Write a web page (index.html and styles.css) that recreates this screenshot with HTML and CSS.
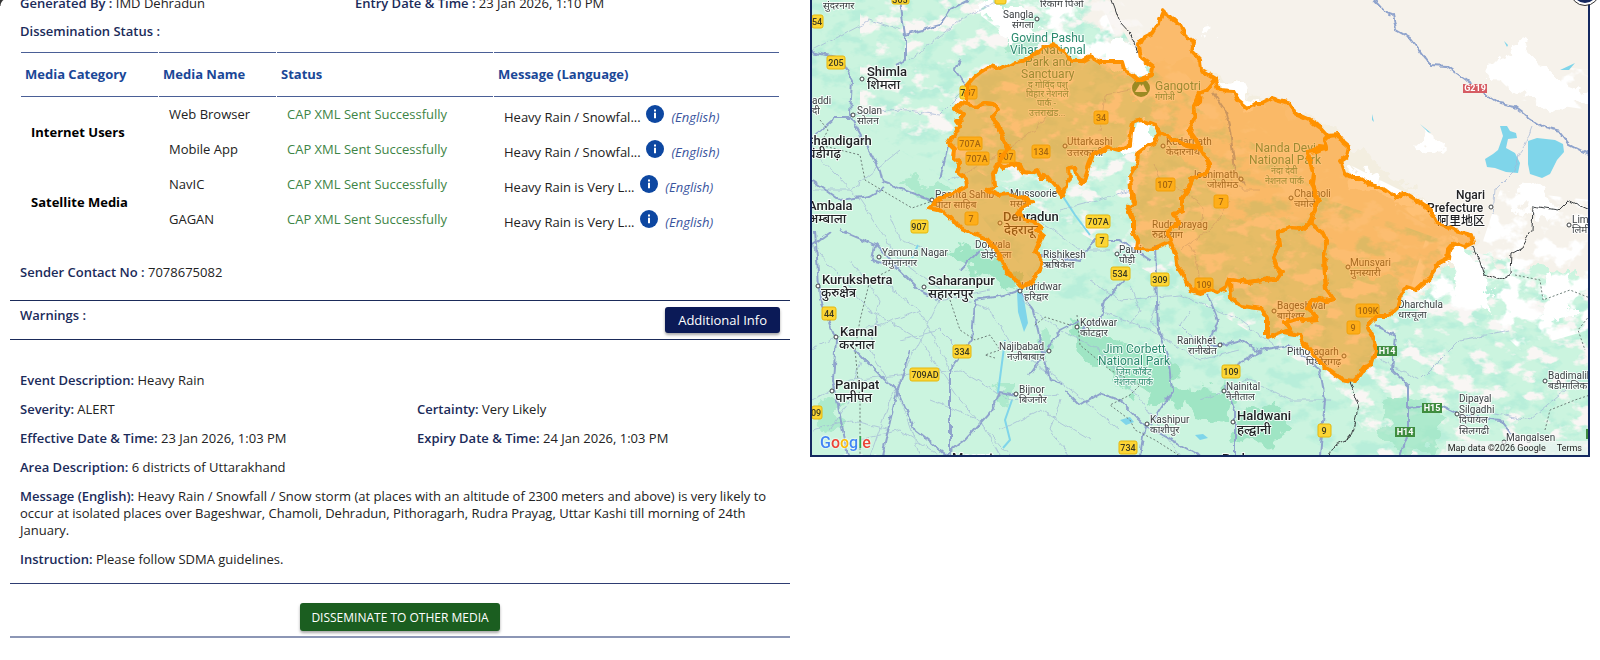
FILE: index.html
```html
<!DOCTYPE html>
<html lang="en">
<head>
<meta charset="utf-8">
<title>Alert details</title>
<link rel="stylesheet" href="styles.css">
</head>
<body>
<span class="corner"></span>
<main class="page">
  <section class="details">
    <div class="pair pair-head">
      <p class="item"><b>Generated By :</b> IMD Dehradun</p>
      <p class="item"><b>Entry Date &amp; Time :</b> 23 Jan 2026, 1:10 PM</p>
    </div>
    <p class="item status-title"><b>Dissemination Status :</b></p>
    <table class="media">
      <colgroup><col class="c-cat"><col class="c-name"><col class="c-status"><col></colgroup>
      <thead>
        <tr><th>Media Category</th><th>Media Name</th><th>Status</th><th>Message (Language)</th></tr>
      </thead>
      <tbody>
        <tr><td rowspan="2" class="cat">Internet Users</td><td>Web Browser</td><td class="sent">CAP XML Sent Successfully</td>
          <td class="msg">Heavy Rain / Snowfal... <svg class="info" viewBox="0 0 18 18"><circle cx="9" cy="9" r="9" fill="#0d47a1"/><path d="M8 4.500h2v2H8zM8 7.700h2v5.500H8z" fill="#fff"/></svg> <i>(English)</i></td></tr>
        <tr><td>Mobile App</td><td class="sent">CAP XML Sent Successfully</td>
          <td class="msg">Heavy Rain / Snowfal... <svg class="info" viewBox="0 0 18 18"><circle cx="9" cy="9" r="9" fill="#0d47a1"/><path d="M8 4.500h2v2H8zM8 7.700h2v5.500H8z" fill="#fff"/></svg> <i>(English)</i></td></tr>
        <tr><td rowspan="2" class="cat">Satellite Media</td><td>NavIC</td><td class="sent">CAP XML Sent Successfully</td>
          <td class="msg">Heavy Rain is Very L... <svg class="info" viewBox="0 0 18 18"><circle cx="9" cy="9" r="9" fill="#0d47a1"/><path d="M8 4.500h2v2H8zM8 7.700h2v5.500H8z" fill="#fff"/></svg> <i>(English)</i></td></tr>
        <tr><td>GAGAN</td><td class="sent">CAP XML Sent Successfully</td>
          <td class="msg">Heavy Rain is Very L... <svg class="info" viewBox="0 0 18 18"><circle cx="9" cy="9" r="9" fill="#0d47a1"/><path d="M8 4.500h2v2H8zM8 7.700h2v5.500H8z" fill="#fff"/></svg> <i>(English)</i></td></tr>
      </tbody>
    </table>
    <p class="item contact"><b>Sender Contact No :</b> 7078675082</p>
    <div class="warnings">
      <p class="item"><b>Warnings :</b></p>
      <button type="button" class="btn btn-info">Additional Info</button>
    </div>
    <div class="event">
      <p class="item"><b>Event Description:</b> Heavy Rain</p>
      <div class="pair">
        <p class="item"><b>Severity:</b> ALERT</p>
        <p class="item"><b>Certainty:</b> Very Likely</p>
      </div>
      <div class="pair">
        <p class="item"><b>Effective Date &amp; Time:</b> 23 Jan 2026, 1:03 PM</p>
        <p class="item"><b>Expiry Date &amp; Time:</b> 24 Jan 2026, 1:03 PM</p>
      </div>
      <p class="item"><b>Area Description:</b> 6 districts of Uttarakhand</p>
      <p class="item"><b>Message (English):</b> Heavy Rain / Snowfall / Snow storm (at places with an altitude of 2300 meters and above) is very likely to occur at isolated places over Bageshwar, Chamoli, Dehradun, Pithoragarh, Rudra Prayag, Uttar Kashi till morning of 24th January.</p>
      <p class="item"><b>Instruction:</b> Please follow SDMA guidelines.</p>
    </div>
    <div class="actions">
      <button type="button" class="btn btn-send">DISSEMINATE TO OTHER MEDIA</button>
    </div>
  </section>

  <section class="map">
    <svg class="map-canvas" viewBox="812 0 776 455" preserveAspectRatio="xMidYMid slice">
      <defs>
        <filter id="rough" x="-10%" y="-10%" width="120%" height="120%">
          <feTurbulence type="fractalNoise" baseFrequency="0.050" numOctaves="4" seed="7"/>
          <feDisplacementMap in="SourceGraphic" scale="34" xChannelSelector="R" yChannelSelector="G"/>
        </filter>
        <filter id="wiggle" x="-5%" y="-5%" width="110%" height="110%">
          <feTurbulence type="fractalNoise" baseFrequency="0.120" numOctaves="2" seed="3"/>
          <feDisplacementMap in="SourceGraphic" scale="6" xChannelSelector="R" yChannelSelector="G"/>
        </filter>
        <filter id="relief" x="0" y="0" width="100%" height="100%">
          <feTurbulence type="fractalNoise" baseFrequency="0.045 0.070" numOctaves="4" seed="12"/>
          <feColorMatrix values="0 0 0 0 0.480  0 0 0 0 0.860  0 0 0 0 0.700  0 5 0 0 -2.400"/>
          <feComposite in2="SourceGraphic" operator="in"/>
        </filter>
        <filter id="ridges" x="0" y="0" width="100%" height="100%">
          <feTurbulence type="fractalNoise" baseFrequency="0.040 0.060" numOctaves="4" seed="31"/>
          <feColorMatrix values="0 0 0 0 0.950  0 0 0 0 0.925  0 0 0 0 0.900  0 0 8 0 -4.300"/>
          <feComposite in2="SourceGraphic" operator="in"/>
        </filter>
        <filter id="peaks" x="0" y="0" width="100%" height="100%">
          <feTurbulence type="fractalNoise" baseFrequency="0.040 0.050" numOctaves="4" seed="5"/>
          <feColorMatrix values="0 0 0 0 1  0 0 0 0 1  0 0 0 0 1  9 0 0 0 -4.300"/>
          <feComposite in2="SourceGraphic" operator="in"/>
        </filter>
      </defs>

      <rect x="812" width="778" height="456" fill="#cbf4df"/>
      <g filter="url(#rough)">
        <path d="M1040-20L1120 50L1210 90L1330 160L1480 255L1530 270L1640 290V-20Z" fill="#f6f2eb"/>
        <path d="M1110 70L1190 60 1330 130 1480 240 1420 290 1340 260 1280 215 1230 220 1160 120Z" fill="#f3eee0"/>
      </g>
      <path class="hills" filter="url(#relief)" d="M812 0H1105L1140 60L1330 200L1470 250L1590 290V456H1345L1210 400L1120 330L1040 290L960 190L870 130L812 100Z"/>
      <path class="hills" filter="url(#ridges)" d="M860 0H1120L1200 90L1330 170L1470 250L1590 290V456H1380L1330 380L1180 290L1040 210L960 160L860 110Z"/>
      <path class="hills" filter="url(#peaks)" d="M1430 225L1480 250 1590 250V330L1520 350 1490 320 1440 310 1410 290ZM960 0H1100L1130 70 1090 60 1000 30ZM1480 60L1590 70V110L1520 100ZM1350 165L1440 210 1430 230ZM1500 190L1590 200V250H1480Z"/>
      <g fill="#9fe5c4" filter="url(#rough)">
        <path d="M955 245l45 8 25 30-10 12-35-20-28-15zM1075 325l40 15 50 15 22 45-25 8-50-28-38-35zM1180 390l30-12 25 20-10 25-35-5zM1235 415l40-12 20 25-30 20-35-10z"/>
        <path d="M905 175l50 15-10 12-45-12zM1390 395l30 5 30 20-20 30-35 5-15-20zM1000 20l35 5 5 30-28-5z" opacity=".7"/>
        <path d="M1040 330l15 15-5 20-15-15zM995 385h15l-2 20-14-5zM820 400l25 5-5 22-22-2z" opacity=".7"/>
      </g>
      <g fill="#fff" filter="url(#rough)">
        <path d="M975 5h40l25 20-15 15-35-12zM1105 40l20-5 22 25 5 20-22-2-20-20zM1130 125l22-6 5 20-18 16-12-6zM1215 80l28 5 20 20-20 6-18-18zM1205 38l6-8 5 12z"/>
        <path d="M1345 165l25 12 30 15 15 2 16 18-30-8-50-22zM1450 240l20 12 10 20 15 18-5 20-30-10-10-30zM1555 275l15 18 0 22-22 8-8-15z"/>
        <path d="M1488 70l15-15 10 5 5-20 10 8 5 20 15 8 20 10 25 5v15l-30-5-15 12-20-15-20-6zM1520 192l30-5 8 22-20 10-20-5zM1425 128l8 5 5 18-12-5z"/>
      </g>
      <g fill="#7fd5ea">
        <path d="M1500 126l7 0 3 5 6 2 1 5-9 1-2 9 9 5 5 10-2 10-12-1-11-4-8-1-2-8 8-5 5-4 5-14z"/>
        <path d="M1528 141l9-3 18 2 8 4 1 8-7 8-7 14-8 4-12-4-2-10z"/>
        <path d="M1560 70l15-7-6 7zM1420 124l11 9-3-1zM1017 292l6 1 5 30-4 9-6-20zM1120 420l10-3 4 5-8 3zM1195 435l8-1 5 4-8 2zM1372 114l2 8-2-2zM1504 41l4 4-1 2z"/>
      </g>
      <path class="river" d="M1062 195L1075 215 1090 235M1012 400L1005 420 1010 440 1003 448M918 245L912 258M998 393L1005 340"/>

      <g class="lanes" filter="url(#wiggle)">
        <path d="M812 150L860 200 900 260 940 290 990 310 1015 350 1060 380 1120 430M812 245L870 310 920 340 960 400 1010 456M812 400L850 380 900 375 960 370 1010 400 1060 395M870 456L890 400 940 300 990 290M812 350L850 330 880 325 920 310M850 260L880 300 870 350 900 400 920 456M1020 300L1060 330 1100 350 1140 400 1180 456M1040 220L1080 250 1110 250M1060 210L1100 200 1130 190M1090 280L1120 300 1180 295 1240 320 1280 350M1100 310L1150 330 1200 360 1240 350M1200 400L1250 380 1290 400 1330 400"/>
        <path d="M860 440L900 430 940 456M812 430L850 420 890 430M900 340L940 330 960 350M880 280L920 310 950 370M1000 430L1040 410 1090 440M1060 400L1050 430 1070 456M860 360L850 400 830 430M930 400L980 420 1000 456M890 215L900 240 930 250M1160 300L1150 320 1165 340M1190 310L1180 325 1195 340M1130 285L1140 310 1130 325"/>
        <path d="M850 115L900 110 940 115 970 85M812 50L870 20 900 30M910 60L960 20 1000 0M812 190L850 190 900 150M950 180L990 160 1035 130 1050 110M1230 180L1245 190 1260 190M1180 250L1210 230 1230 200M1380 360L1420 380 1460 340 1510 330M1480 410L1530 420 1590 370M1100 130L1105 95 1130 90M1153 165L1160 180 1190 195 1203 205 1202 225M1190 245L1198 265 1200 290M1532 127L1525 145 1518 155 1515 170 1495 190 1493 215"/>
      </g>
      <g class="roads" filter="url(#wiggle)">
        <path d="M812 52L840 58 852 80 850 115 880 170 883 182 930 200M850 118L835 118 815 135M900 0L905 35 905 60 895 65M905 35L940 25 950 10 968 0M960 60L955 70 968 90M948 145L940 180M815 230L820 300 836 340 833 380 848 456M812 245L830 232M840 230L875 245 900 270 922 292 940 300M875 245L872 260 890 265M884 188L870 196 840 200 812 180M855 350L900 395 915 430 948 456M910 350L895 400 882 456M975 300L972 340 950 370 950 400 950 456M975 300L1005 295 1020 290 1033 310 1040 340 1050 380 1062 383M1018 395L1000 392 992 410 965 440 945 456M1030 375L1060 330 1080 320M960 270L980 250M1065 390L1080 405 1100 393 1120 400 1145 425 1200 456M1145 425L1140 456M1150 425L1173 390 1170 365 1158 330 1155 245M1125 280L1105 300 1100 320 1080 330M1120 240L1150 260M1208 295L1218 320 1210 345 1222 345 1240 340 1260 352 1235 365M1225 385L1235 410 1235 456M1260 350L1290 345 1320 370 1325 400 1320 456M1375 325L1395 335 1392 370 1408 385 1408 430 1400 456M1408 408L1440 405 1460 415 1500 420 1512 435M1040 255L1080 260 1095 240 1120 240M1213 92L1225 110 1230 130 1235 170 1245 185"/>
        <path d="M1374 0L1385 12 1393 15 1396 30 1410 38 1431 65 1447 66 1480 90 1500 104 1515 107 1530 118 1545 128 1560 132 1570 145 1590 155"/>
      </g>
      <g class="dotted">
        <path d="M820 120L828 130 820 145 860 155 865 180 890 195 912 208 950 195M890 270L870 280 860 320 855 350 860 400 860 456M950 300L960 330 975 340 990 335 1000 350 985 355 995 358M1035 325L1045 317 1070 325M1077 315L1080 345 1110 370 1140 385 1130 395 1110 405 1130 420 1135 430 1155 440 1180 456M1515 275L1540 280 1543 300 1570 290 1590 298M1590 315L1578 330 1585 350M1545 430L1550 410 1575 400 1590 395"/>
      </g>
      <g class="frontier" filter="url(#wiggle)">
        <path d="M1112 0L1120 22 1130 33 1138 52M1190 45L1200 62M1473 247L1480 262 1484 275 1497 280 1510 275 1511 254 1522 248 1532 230 1533 206 1545 208 1558 210 1568 200 1590 210M1350 382L1359 405 1354 425 1350 438 1334 445 1330 456"/>
      </g>

      <g class="places">
        <text x="823" y="9">सुंदरनगर</text>
        <text x="1040" y="7">रिकांग पिओ</text>
        <text x="1003" y="18">Sangla</text><text x="1012" y="28">संगला</text>
        <g class="park"><text x="1011" y="42">Govind Pashu</text><text x="1010" y="54">Vihar National</text><text x="1025" y="66">Park and</text><text x="1021" y="78">Sanctuary</text></g>
        <g class="park park-hi"><text x="1028" y="88">द गोविंद पशु</text><text x="1026" y="97">विहार नेशनल</text><text x="1037" y="106">पार्क -</text><text x="1029" y="116">उत्तराखंड...</text></g>
        <text x="812" y="104">addi</text><text x="812" y="114">दी</text>
        <text x="857" y="114">Solan</text><text x="857" y="124">सोलन</text>
        <g class="city"><text x="867" y="76">Shimla</text><text x="867" y="89">शिमला</text><text x="805" y="145">Chandigarh</text><text x="807" y="158">चंडीगढ़</text><text x="808" y="210">Ambala</text><text x="808" y="223">अम्बाला</text>
        <text x="1003" y="221">Dehradun</text><text x="1004" y="234">देहरादून</text>
        <text x="822" y="284">Kurukshetra</text><text x="821" y="297">कुरुक्षेत्र</text><text x="928" y="285">Saharanpur</text><text x="928" y="298">सहारनपुर</text><text x="840" y="336">Karnal</text><text x="839" y="349">करनाल</text><text x="835" y="389">Panipat</text><text x="835" y="402">पानीपत</text><text x="1237" y="420">Haldwani</text><text x="1237" y="434">हल्द्वानी</text><text x="952" y="462">Meerut</text><text x="1222" y="463">Rudrapur</text></g>
        <g class="city mid"><text x="1456" y="199">Ngari</text><text x="1427" y="212">Prefecture</text><text x="1437" y="225" class="cjk">阿里地区</text></g>
        <text x="935" y="198">Paonta Sahib</text><text x="935" y="208">पांटा साहिब</text>
        <text x="1010" y="197">Mussoorie</text><text x="1010" y="207">मसूरी</text>
        <text x="1067" y="145">Uttarkashi</text><text x="1067" y="156">उत्तरकाशी</text>
        <g class="park"><text x="1155" y="90">Gangotri</text><text x="1255" y="152">Nanda Devi</text><text x="1249" y="164">National Park</text></g>
        <g class="park park-hi"><text x="1155" y="100">गंगोत्री</text><text x="1271" y="174">नंदा देवी</text><text x="1265" y="184">नेशनल पार्क</text></g>
        <text x="1166" y="145">Kedarnath</text><text x="1166" y="155">केदारनाथ</text>
        <text x="1191" y="178">Joshimath</text><text x="1207" y="188">जोशीमठ</text>
        <text x="1294" y="197">Chamoli</text><text x="1294" y="207">चमोली</text>
        <text x="1152" y="228">Rudraprayag</text><text x="1152" y="238">रुद्रप्रयाग</text>
        <text x="975" y="248">Doiwala</text><text x="981" y="258">डोईवाला</text>
        <text x="1043" y="258">Rishikesh</text><text x="1043" y="268">ऋषिकेश</text>
        <text x="1119" y="253">Pauri</text><text x="1119" y="263">पौड़ी</text>
        <text x="882" y="256">Yamuna Nagar</text><text x="882" y="266">यमुनानगर</text>
        <text x="1021" y="290">Haridwar</text><text x="1024" y="300">हरिद्वार</text>
        <text x="999" y="350">Najibabad</text><text x="1007" y="360">नज़ीबाबाद</text>
        <text x="1019" y="393">Bijnor</text><text x="1019" y="403">बिजनौर</text>
        <text x="1080" y="326">Kotdwar</text><text x="1080" y="336">कोटद्वार</text>
        <text x="1177" y="344">Ranikhet</text><text x="1188" y="354">रानीखेत</text>
        <g class="park"><text x="1103" y="353">Jim Corbett</text><text x="1098" y="365">National Park</text></g>
        <g class="park park-hi"><text x="1116" y="375">जिम कॉर्बेट</text><text x="1114" y="385">नेशनल पार्क</text></g>
        <text x="1226" y="390">Nainital</text><text x="1226" y="400">नैनीताल</text>
        <text x="1150" y="423">Kashipur</text><text x="1150" y="433">काशीपुर</text>
        <text x="1277" y="309">Bageshwar</text><text x="1277" y="319">बागेश्वर</text>
        <text x="1287" y="355">Pithoragarh</text><text x="1306" y="365">पिथौरागढ़</text>
        <text x="1350" y="266">Munsyari</text><text x="1350" y="276">मुनस्यारी</text>
        <text x="1398" y="308">Dharchula</text><text x="1398" y="318">धारचूला</text>
        <text x="1459" y="402">Dipayal</text><text x="1459" y="413">Silgadhi</text><text x="1459" y="423">दिपायल</text><text x="1459" y="434">सिलगढी</text>
        <text x="1548" y="379">Badimalika</text><text x="1548" y="389">बडीमालिका</text>
        <text x="1506" y="441">Mangalsen</text>
        <text x="1572" y="223">Limi</text><text x="1572" y="233">लिमी</text>
        <text x="843" y="463">Sonipat</text>
      </g>
      <g class="dots">
        <circle cx="862" cy="79" r="2"/><circle cx="853" cy="115" r="2"/><circle cx="1037" cy="19" r="2"/><circle cx="932" cy="200" r="2"/><circle cx="1000" cy="223" r="2"/><circle cx="879" cy="257" r="2"/><circle cx="818" cy="286" r="2"/><circle cx="924" cy="287" r="2"/><circle cx="836" cy="337" r="2"/><circle cx="832" cy="391" r="2"/><circle cx="1020" cy="291" r="2"/><circle cx="1049" cy="351" r="2"/><circle cx="1016" cy="394" r="2"/><circle cx="1077" cy="327" r="2"/><circle cx="1117" cy="254" r="2"/><circle cx="1220" cy="345" r="2"/><circle cx="1224" cy="391" r="2"/><circle cx="1233" cy="422" r="2"/><circle cx="1147" cy="424" r="2"/><circle cx="1163" cy="146" r="2"/><circle cx="1241" cy="179" r="2"/><circle cx="1291" cy="198" r="2"/><circle cx="1274" cy="311" r="2"/><circle cx="1344" cy="356" r="2"/><circle cx="1348" cy="267" r="2"/><circle cx="1491" cy="207" r="2"/><circle cx="1457" cy="414" r="2"/><circle cx="1545" cy="381" r="2"/><circle cx="1504" cy="442" r="2"/><circle cx="1569" cy="225" r="2"/><circle cx="1065" cy="146" r="2"/>
      </g>
      <g><path d="M1141 103c-4-5-10-8-10-14a10 10 0 0 1 20 0c0 6-6 9-10 14z" fill="#fff"/><circle cx="1141" cy="88" r="9" fill="#26884c"/><path d="M1135 92l5-8 1.500 2 1.500-2 4 8z" fill="#fff"/></g>

      <g class="shields">
        <rect x="812" y="15" width="11" height="13" rx="2"/><rect x="827" y="56" width="18" height="13" rx="2"/><rect x="892" y="-8" width="17" height="12" rx="2"/><rect x="995" y="-8" width="11" height="12" rx="2"/><rect x="960" y="86" width="17" height="13" rx="2"/><rect x="958" y="137" width="24" height="13" rx="2"/><rect x="966" y="152" width="23" height="13" rx="2"/><rect x="998" y="150" width="17" height="13" rx="2"/><rect x="1032" y="145" width="18" height="13" rx="2"/><rect x="965" y="212" width="13" height="13" rx="2"/><rect x="911" y="220" width="17" height="13" rx="2"/><rect x="1094" y="111" width="14" height="13" rx="2"/><rect x="1156" y="178" width="19" height="13" rx="2"/><rect x="1214" y="195" width="14" height="13" rx="2"/><rect x="1086" y="215" width="24" height="13" rx="2"/><rect x="1096" y="234" width="12" height="13" rx="2"/><rect x="1111" y="267" width="19" height="13" rx="2"/><rect x="1151" y="273" width="18" height="13" rx="2"/><rect x="1195" y="278" width="18" height="13" rx="2"/><rect x="822" y="307" width="14" height="13" rx="2"/><rect x="953" y="345" width="18" height="13" rx="2"/><rect x="910" y="368" width="29" height="13" rx="2"/><rect x="812" y="406" width="10" height="13" rx="2"/><rect x="1119" y="441" width="18" height="13" rx="2"/><rect x="1222" y="365" width="18" height="13" rx="2"/><rect x="1318" y="424" width="13" height="13" rx="2"/><rect x="1356" y="304" width="23" height="13" rx="2"/><rect x="1347" y="321" width="13" height="13" rx="2"/>
      </g>
      <g class="shield-no">
        <text x="817" y="25">54</text><text x="836" y="66">205</text><text x="900" y="3">305</text><text x="968" y="96">707</text><text x="970" y="147">707A</text><text x="977" y="162">707A</text><text x="1006" y="160">507</text><text x="1041" y="155">134</text><text x="971" y="222">7</text><text x="919" y="230">907</text><text x="1101" y="121">34</text><text x="1165" y="188">107</text><text x="1221" y="205">7</text><text x="1098" y="225">707A</text><text x="1102" y="244">7</text><text x="1120" y="277">534</text><text x="1160" y="283">309</text><text x="1204" y="288">109</text><text x="829" y="317">44</text><text x="962" y="355">334</text><text x="925" y="378">709AD</text><text x="816" y="416">09</text><text x="1128" y="451">734</text><text x="1231" y="375">109</text><text x="1324" y="434">9</text><text x="1368" y="314">109K</text><text x="1353" y="331">9</text>
      </g>
      <g class="nepal-roads"><rect x="1377" y="346" width="20" height="10"/><rect x="1422" y="403" width="20" height="10"/><rect x="1395" y="427" width="20" height="10"/><rect x="1586" y="429" width="4" height="10"/></g>
      <rect x="1463" y="84" width="24" height="9" fill="#d65c63"/>
      <g class="route-no"><text x="1387" y="354">H14</text><text x="1432" y="411">H15</text><text x="1405" y="435">H14</text><text x="1475" y="91">G219</text></g>

      <g class="districts" filter="url(#wiggle)">
        <path d="M967 85L974 77 982 71 990 66 1001 69 1012 63 1022 61 1034 55 1043 48 1053 45 1064 51 1072 61 1082 61 1091 56 1101 62 1122 62 1124 69 1138 80 1152 75 1153 67 1141 58 1139 46 1144 37 1152 33 1158 24 1163 12 1171 17 1180 25 1186 36 1194 42 1192 52 1200 60 1201 70 1216 79 1207 90 1200 93 1199 102 1194 106 1195 116 1189 130 1196 140 1200 148 1187 146 1173 139 1159 133 1155 125 1142 120 1133 122 1131 132 1130 145 1119 150 1108 147 1093 155 1089 165 1083 184 1078 177 1075 168 1069 169 1070 178 1062 195 1056 187 1050 180 1045 174 1041 178 1037 170 1030 173 1023 172 1018 165 1010 164 1003 168 998 163 1002 157 1008 149 1003 137 998 125 992 117 998 110 993 104 985 103 975 107 967 104Z"/>
        <path d="M967 104L960 103 955 109 964 114 960 121 957 121 961 127 953 135 948 143 955 150 954 158 960 163 957 172 966 179 967 186 958 191 939 199 928 208 942 211 951 218 960 228 977 235 988 240 996 250 1000 258 1006 268 1007 273 1016 280 1021 286 1031 284 1038 272 1043 262 1035 252 1038 245 1043 235 1037 230 1041 227 1034 222 1024 220 1017 213 1022 207 1032 202 1022 197 1008 194 998 195 987 190 994 187 993 175 998 163 1002 157 1008 149 1003 137 998 125 992 117 998 110 993 104 985 103 975 107Z"/>
        <path d="M1159 133L1155 143 1146 147 1138 153 1137 163 1130 175 1131 190 1134 203 1128 207 1133 218 1133 232 1138 242 1137 248 1150 250 1165 245 1170 242 1168 232 1179 222 1173 213 1182 210 1182 197 1189 188 1193 178 1205 174 1210 164 1205 156 1200 148 1187 146 1173 139Z"/>
        <path d="M1216 79L1219 90 1233 91 1238 100 1248 108 1256 103 1262 103 1272 98 1283 101 1290 103 1296 114 1310 120 1320 127 1328 136 1324 140 1326 148 1318 147 1315 151 1307 152 1311 161 1313 172 1312 183 1318 200 1312 217 1310 223 1303 229 1290 228 1278 232 1280 245 1273 257 1276 266 1282 272 1277 279 1262 280 1248 282 1230 279 1226 288 1218 293 1210 290 1200 293 1190 290 1184 276 1177 265 1176 255 1170 242 1168 232 1179 222 1173 213 1182 210 1182 197 1189 188 1193 178 1205 174 1210 164 1205 156 1200 148 1189 130 1195 116 1194 106 1200 93 1207 90Z"/>
        <path d="M1230 279L1231 298 1242 306 1262 309 1267 318 1267 338 1275 335 1283 332 1290 330 1285 322 1297 319 1305 321 1316 320 1315 314 1308 308 1312 301 1320 299 1325 301 1334 299 1326 288 1325 275 1324 255 1327 242 1322 232 1310 223 1303 229 1290 228 1278 232 1280 245 1273 257 1276 266 1282 272 1277 279 1262 280 1248 282Z"/>
        <path d="M1328 136L1338 135 1343 142 1349 147 1347 156 1341 160 1345 172 1351 178 1360 178 1372 185 1385 190 1396 198 1403 193 1417 201 1430 210 1436 222 1455 231 1471 235 1473 243 1465 247 1455 243 1449 250 1448 258 1440 262 1427 280 1416 290 1406 287 1400 297 1397 307 1388 316 1377 316 1367 327 1373 338 1376 350 1372 363 1364 368 1357 378 1354 381 1341 379 1330 371 1320 363 1310 350 1302 340 1300 335 1283 332 1290 330 1285 322 1297 319 1305 321 1316 320 1315 314 1308 308 1312 301 1320 299 1325 301 1334 299 1326 288 1325 275 1324 255 1327 242 1322 232 1310 223 1318 200 1312 183 1313 172 1307 152 1315 151 1326 148 1324 140Z"/>
      </g>
    </svg>
    <span class="google" aria-label="Google"><span class="g-blue">G</span><span class="g-red">o</span><span class="g-yellow">o</span><span class="g-blue">g</span><span class="g-green">l</span><span class="g-red">e</span></span>
    <div class="credits"><span>Map data ©2026 Google</span><a href="#terms">Terms</a></div>
    <button type="button" class="close" aria-label="Close"></button>
  </section>
</main>
</body>
</html>
```
FILE: styles.css
```css
* { box-sizing: border-box; }
body {
  margin: 0;
  background: #fff;
  color: #222;
  font-family: "Open Sans", "Noto Sans", sans-serif;
  font-size: 13px;
  line-height: 17px;
  overflow: hidden;
}
.corner {
  position: absolute;
  left: 0;
  top: 0;
  width: 8px;
  height: 6px;
  background: radial-gradient(circle at 100% 100%, transparent 7px, #333 8px);
}
.page {
  display: grid;
  grid-template-columns: 1fr 1fr;
  gap: 20px;
  align-items: start;
  padding: 0 10px;
}
.item { margin: 0; }
.item b { font-weight: 600; color: #1b2b5a; }
.pair { display: grid; grid-template-columns: 397px 1fr; }
.pair-head { grid-template-columns: 335px 1fr; margin: -5px 10px 0; }
.status-title { margin: 11px 10px 12px; }
.media {
  width: calc(100% - 20px);
  margin: 0 10px;
  table-layout: fixed;
  border-collapse: separate;
  border-spacing: 1px 0;
}
.c-cat { width: 137px; }
.c-name { width: 117px; }
.c-status { width: 216px; }
.media th {
  height: 45px;
  padding: 0 4px;
  text-align: left;
  font-weight: 700;
  color: #1a4797;
  border-top: 1px solid #4a5f96;
  border-bottom: 1px solid #4a5f96;
}
.media td { height: 35px; padding: 0 10px; white-space: nowrap; }
.media td.cat { font-weight: 700; color: #000; }
.media td.sent { color: #3d8446; }
.media td.msg { padding-top: 2px; }
.msg i { color: #3a559e; margin-left: 4px; }
.info { width: 18px; height: 18px; margin-left: 2px; vertical-align: -1px; }
.contact { margin: 27px 10px 19px; }
.warnings {
  display: flex;
  justify-content: space-between;
  align-items: flex-start;
  padding: 6px 10px 6px;
  border-top: 1px solid #1b2b5a;
  border-bottom: 1px solid #1b2b5a;
}
.btn {
  border: 0;
  border-radius: 3px;
  color: #fff;
  font-family: inherit;
  box-shadow: 0 2px 3px rgba(0, 0, 0, .35);
}
.btn-info { height: 26px; padding: 0 13px; background: #0b1a57; font-size: 13px; }
.btn-send { height: 28px; padding: 0 11px; background: #1b5e20; font-size: 12px; }
.event {
  display: flex;
  flex-direction: column;
  gap: 12px;
  padding: 32px 10px 15px;
}
.actions {
  display: flex;
  justify-content: center;
  padding: 19px 0 5px;
  border-top: 1px solid #2e3d72;
  border-bottom: 2px solid #8c96b5;
}
.map {
  position: relative;
  border: 2px solid #14285f;
  border-top: 0;
}
.map-canvas { display: block; width: 100%; overflow: hidden; }
.hills { fill: #000; }
.river { fill: none; stroke: #7fd5ea; stroke-width: 2; }
.lanes { fill: none; stroke: #a3b6d6; stroke-width: 1; opacity: .7; }
.roads { fill: none; stroke: #8fa3cc; stroke-width: 2; }
.dotted { fill: none; stroke: #6e7f7a; stroke-width: 1; stroke-dasharray: 2 2; }
.frontier { fill: none; stroke: #3c4043; stroke-width: 1; }
.places {
  font-family: Roboto, "Noto Sans", sans-serif;
  font-size: 10px;
  fill: #3c4043;
  stroke: #fff;
  stroke-width: 2px;
  stroke-opacity: .8;
  stroke-linejoin: round;
  paint-order: stroke;
}
.places .city { font-size: 13px; font-weight: 500; fill: #202124; }
.places .mid { font-size: 12px; }
.places .cjk { font-family: "Noto Sans CJK SC", sans-serif; }
.places .park { font-size: 12px; fill: #2a8a6e; }
.places .park-hi { font-size: 9px; }
.dots { fill: #fff; stroke: #3c4043; stroke-width: 1; }
.shields { fill: #fcd535; stroke: #e5b70c; stroke-width: 1; }
.shield-no { font: 500 9px Roboto, sans-serif; fill: #3c3a20; text-anchor: middle; }
.nepal-roads { fill: #3f8c3f; }
.route-no { font: 700 9px Roboto, sans-serif; fill: #fff; text-anchor: middle; }
.districts {
  fill: #ff8c00;
  fill-opacity: .54;
  stroke: #ff9200;
  stroke-width: 4;
  stroke-linejoin: round;
}
.google {
  position: absolute;
  left: 8px;
  bottom: 2px;
  font: 500 16px/20px Roboto, sans-serif;
  text-shadow: 0 0 2px #fff, 0 0 2px #fff;
}
.g-blue { color: #4285f4; }
.g-red { color: #ea4335; }
.g-yellow { color: #fbbc05; }
.g-green { color: #34a853; }
.credits {
  position: absolute;
  right: 0;
  bottom: 0;
  display: flex;
  gap: 11px;
  padding: 0 6px 0 2px;
  background: rgba(245, 245, 245, .7);
  color: #222;
  font: 9px/14px Roboto, sans-serif;
}
.credits a { color: inherit; text-decoration: none; }
.close {
  position: absolute;
  right: -11px;
  top: -23px;
  width: 28px;
  height: 28px;
  padding: 0;
  border: 2px solid #fff;
  border-radius: 50%;
  background: #14285f;
  outline: 1px solid #333;
}
```
